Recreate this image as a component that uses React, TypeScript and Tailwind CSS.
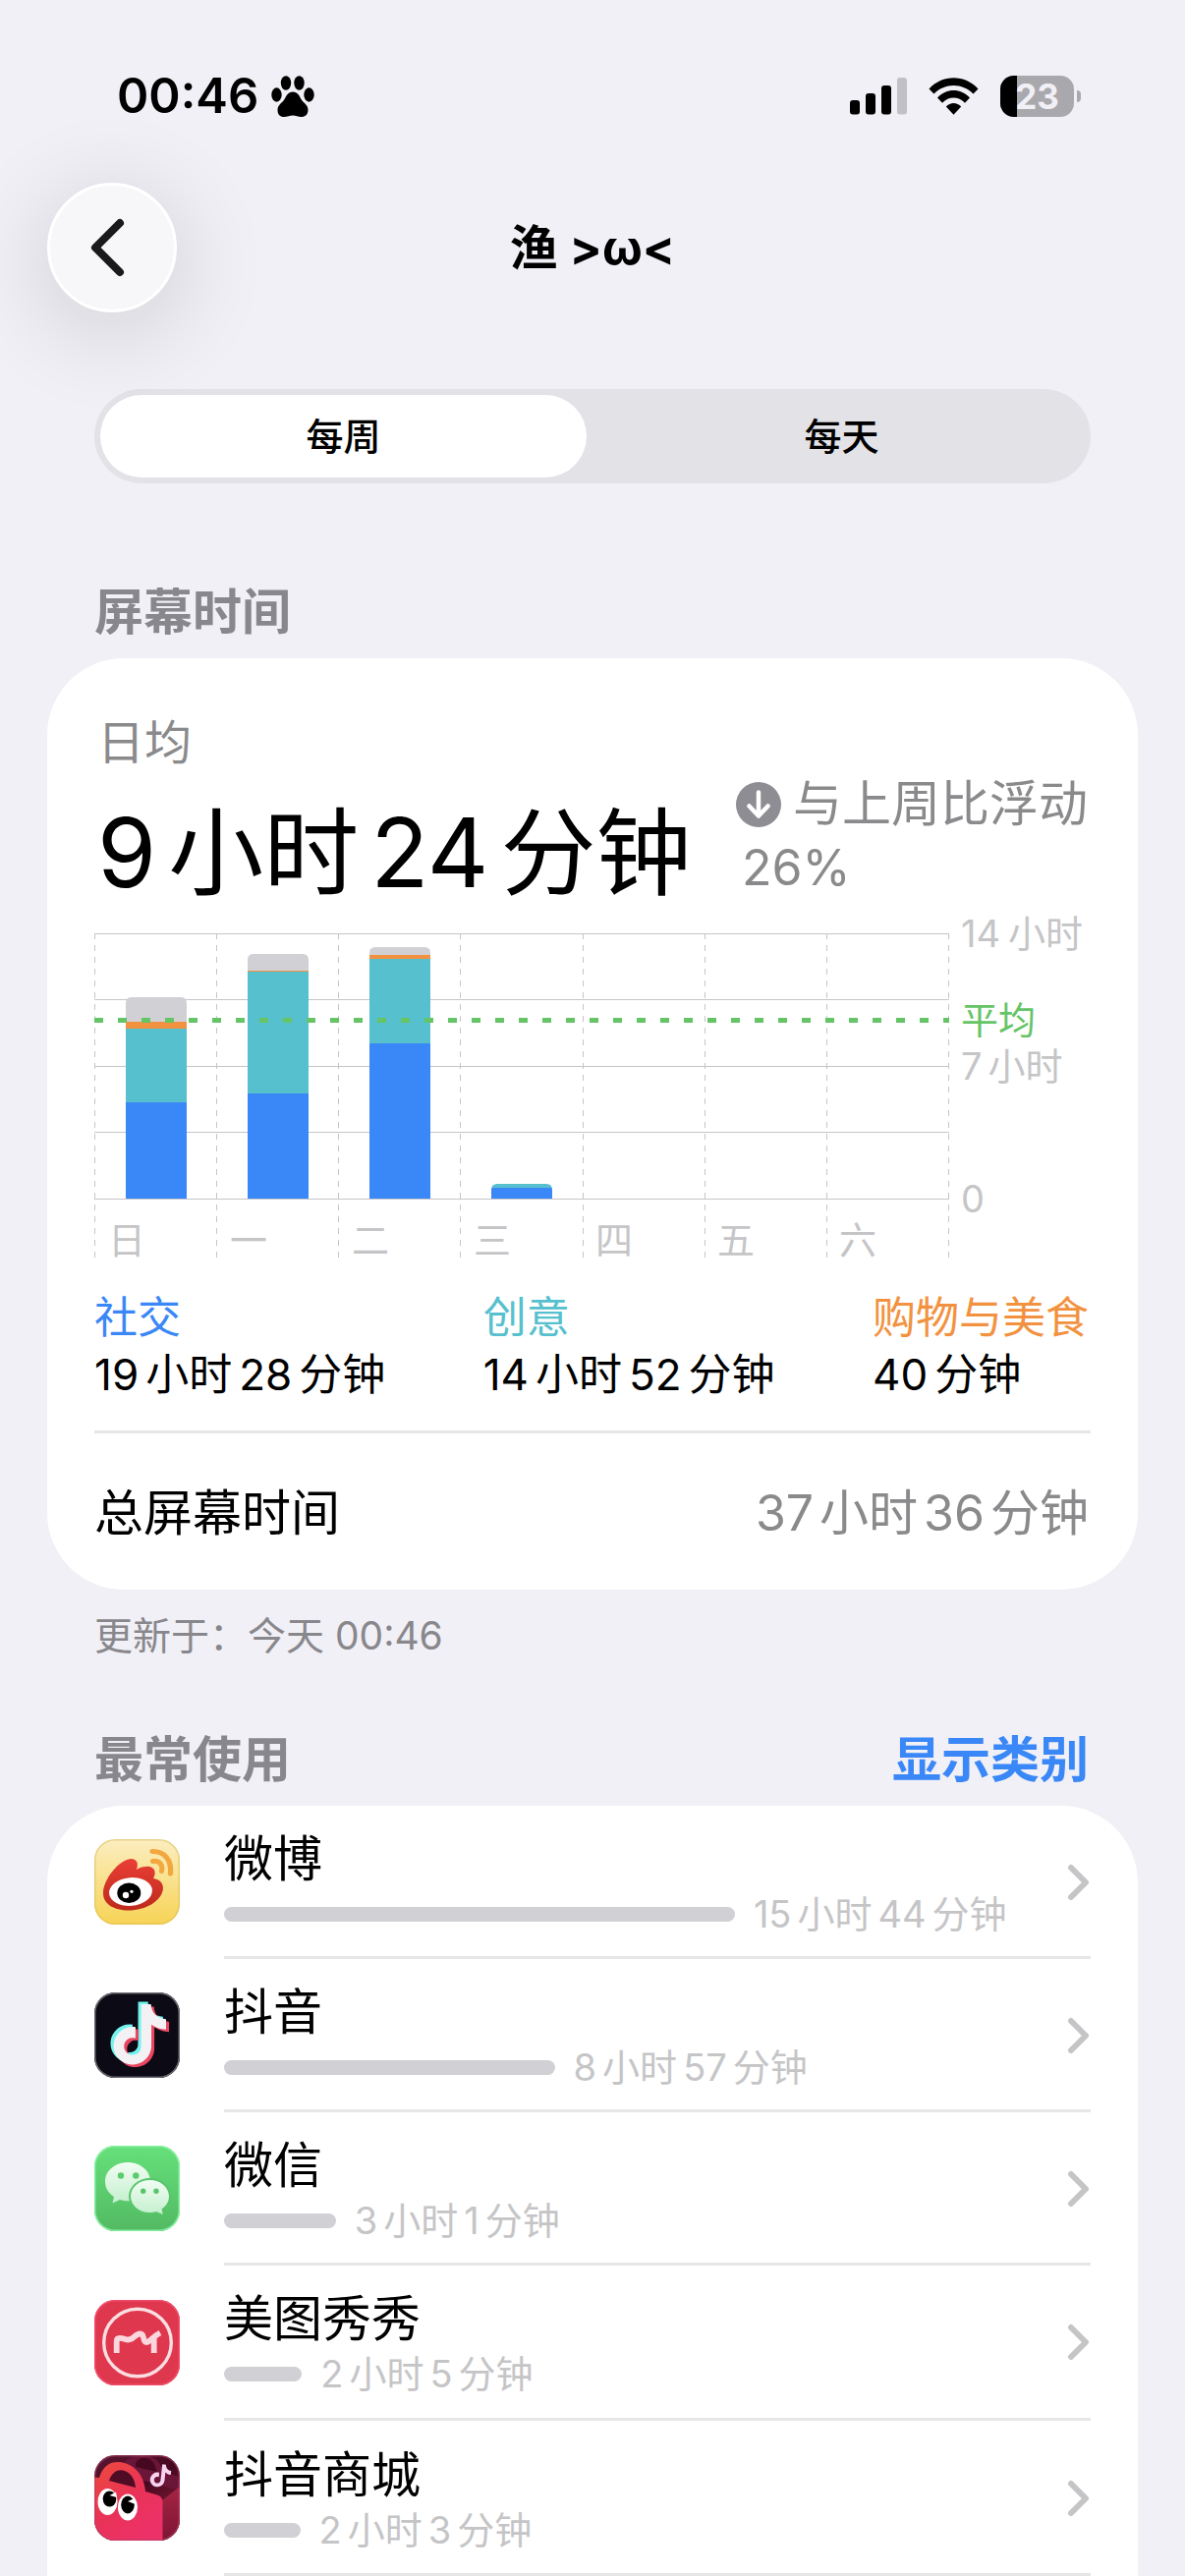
import { Fragment, useState } from 'react';
import type { ReactNode } from 'react';

const NOTE =
  'M12.525.02c1.31-.02 2.61-.01 3.91-.02.08 1.53.63 3.09 1.75 4.17 1.12 1.11 2.7 1.62 4.24 1.79v4.03c-1.44-.05-2.89-.35-4.2-.97-.57-.26-1.1-.59-1.62-.93-.01 2.92.01 5.84-.02 8.75-.08 1.4-.54 2.79-1.35 3.94-1.31 1.92-3.58 3.17-5.91 3.21-1.43.08-2.86-.31-4.08-1.03-2.02-1.19-3.44-3.37-3.65-5.71-.02-.5-.03-1-.01-1.49.18-1.9 1.12-3.72 2.58-4.96 1.66-1.44 3.98-2.13 6.15-1.72.02 1.48-.04 2.96-.04 4.44-.99-.32-2.15-.23-3.02.37-.63.41-1.11 1.04-1.36 1.75-.21.51-.15 1.07-.14 1.61.24 1.64 1.82 3.02 3.5 2.87 1.12-.01 2.19-.66 2.77-1.61.19-.33.4-.67.41-1.06.1-1.79.06-3.57.07-5.36.01-4.03-.01-8.05.02-12.07z';

/* Rounded app tile shared by every app icon */
function Tile({ fill, edge, children }: { fill: string; edge: string; children: ReactNode }) {
  return (
    <svg viewBox="0 0 87 87" className="size-[87px] shrink-0" aria-hidden="true">
      <rect width="87" height="87" rx="21" fill={fill} />
      {children}
      <rect x="0.75" y="0.75" width="85.5" height="85.5" rx="20.5" fill="none" stroke={edge} strokeWidth="1.5" />
    </svg>
  );
}

function WeiboIcon() {
  return (
    <Tile fill="url(#wb)" edge="#d9bb5a88">
      <defs>
        <linearGradient id="wb" x1="0" y1="0" x2="0" y2="1">
          <stop offset="0" stopColor="#fbeec0" />
          <stop offset="1" stopColor="#f7d355" />
        </linearGradient>
        <linearGradient id="wbr" x1="0" y1="0" x2="0" y2="1">
          <stop offset="0" stopColor="#ea3f35" />
          <stop offset="1" stopColor="#be2a1d" />
        </linearGradient>
      </defs>
      <path
        d="M9 55C9 41 25 21 37 20C44 20 45 25 43 31C50 27 60 26 61.500 33C62 36 61 38 60 40C67 41 70 45 70 50C69 63 52 72.500 35 72.500C20 72.500 9 66 9 55Z"
        fill="url(#wbr)"
      />
      <ellipse cx="37" cy="53.500" rx="22" ry="14.300" fill="#fff" transform="rotate(-5 37 53.500)" />
      <ellipse cx="35.300" cy="54.700" rx="12" ry="10.200" fill="#000" />
      <circle cx="32" cy="57" r="3.200" fill="#fff" />
      <circle cx="38" cy="53.300" r="1.600" fill="#fff" />
      <path d="M59.500 22.500C66 21.500 70 26 68.500 32.500" fill="none" stroke="#f2a73f" strokeWidth="5" strokeLinecap="round" />
      <path d="M59 12.500C71 12 79 21 77.500 35" fill="none" stroke="#f2a73f" strokeWidth="5.200" strokeLinecap="round" />
    </Tile>
  );
}

function DouyinIcon() {
  return (
    <Tile fill="#0b0a15" edge="#6a6a72">
      <g transform="translate(12.500 9.500) scale(2.560)">
        <path d={NOTE} fill="#74f3ee" />
        <path d={NOTE} fill="#ea4561" transform="translate(2.400 2)" />
        <path d={NOTE} fill="#f3f1f3" transform="translate(1.200 1)" />
      </g>
    </Tile>
  );
}

function WechatIcon() {
  return (
    <Tile fill="url(#wc)" edge="#86f0a0">
      <defs>
        <linearGradient id="wc" x1="0" y1="0" x2="0" y2="1">
          <stop offset="0" stopColor="#66e07a" />
          <stop offset="1" stopColor="#52ba63" />
        </linearGradient>
        <linearGradient id="wcb" x1="0" y1="0" x2="0" y2="1">
          <stop offset="0" stopColor="#f1fdf3" />
          <stop offset="1" stopColor="#c4efcd" />
        </linearGradient>
      </defs>
      <path
        d="M34 17C21 17 11 25.500 11 36.500C11 43 14.500 48.500 20 52L18.500 58.500L26 55C30 56.300 35 56.500 38 56C50 54 57 46 57 36.500C57 25.500 47 17 34 17Z"
        fill="url(#wcb)"
      />
      <ellipse cx="56.500" cy="51.500" rx="21.500" ry="18.500" fill="#58c56b" />
      <path
        d="M56.500 35C67.500 35 76 42.500 76 51.500C76 57 73 61.500 68.500 64.500L69.800 70L63 67C61 67.700 58.500 68 56.500 68C45.500 68 37 60.500 37 51.500C37 42.500 45.500 35 56.500 35Z"
        fill="url(#wcb)"
      />
      <circle cx="27" cy="30.500" r="3.200" fill="#5bcb6e" />
      <circle cx="42.300" cy="30.500" r="3.200" fill="#5bcb6e" />
      <circle cx="49.700" cy="46.300" r="2.700" fill="#58c56b" />
      <circle cx="63" cy="46.300" r="2.700" fill="#58c56b" />
    </Tile>
  );
}

function MeituIcon() {
  return (
    <Tile fill="#df384e" edge="#f04d6b">
      <circle cx="44" cy="43.500" r="34.300" fill="none" stroke="#fbdde2" strokeWidth="3.400" />
      <path
        d="M22.700 54V42Q22.700 38.800 26 38.800C30 38.800 31 40.500 34.500 40.500C40 40.500 41.500 34.500 46.500 34.500C52 34.500 48.500 43 53 43C56.500 43 59 37.500 67 33.500M60.700 39V54"
        fill="none"
        stroke="#fbd7dd"
        strokeWidth="5.800"
        strokeLinejoin="round"
      />
    </Tile>
  );
}

function MallIcon() {
  return (
    <Tile fill="url(#mb)" edge="#b0486a88">
      <defs>
        <linearGradient id="mb" x1="0" y1="0" x2="0.600" y2="1">
          <stop offset="0" stopColor="#5c1732" />
          <stop offset="0.500" stopColor="#45081f" />
          <stop offset="1" stopColor="#8e1f3c" />
        </linearGradient>
        <linearGradient id="mf" x1="0" y1="0" x2="0.700" y2="1">
          <stop offset="0" stopColor="#ee4a3c" />
          <stop offset="0.550" stopColor="#e93258" />
          <stop offset="1" stopColor="#ec3168" />
        </linearGradient>
        <linearGradient id="ms" x1="0" y1="0" x2="0" y2="1">
          <stop offset="0" stopColor="#a62444" />
          <stop offset="1" stopColor="#7d1533" />
        </linearGradient>
        <clipPath id="mc">
          <rect width="87" height="87" rx="21" />
        </clipPath>
      </defs>
      <g clipPath="url(#mc)">
        <path d="M30 8C38 -3 58 -3 66 8L72 18L87 22V36L50 26Z" fill="#6a1638" />
        <path d="M42 8C46 1 56 1 61 9L64 17L42 12Z" fill="#45081f" />
        <path d="M69 46L87 32V87H69Z" fill="url(#ms)" />
        <path
          d="M0 22.500L5 23C9 10 17 6.500 25 7C40 8 51 20 52 37L64 40.500Q69.500 42 69.500 48V87H0Z"
          fill="url(#mf)"
        />
        <path d="M15 26C18 17 24 14.500 29 15.500C36 17 41 23 42 33Z" fill="#4e0d25" />
        <ellipse cx="13.500" cy="47.500" rx="10" ry="13.500" fill="#fff" />
        <ellipse cx="34" cy="53" rx="10" ry="13.500" fill="#fff" />
        <ellipse cx="15.500" cy="44.500" rx="6.800" ry="8" fill="#000" />
        <ellipse cx="34" cy="50.500" rx="6.800" ry="9" fill="#000" />
        <path d="M15.500 41L22 37.500L23 43Z" fill="#fff" />
        <path d="M34 47L41 44L42 50Z" fill="#fff" />
        <path d={NOTE} fill="#f6d3ef" transform="translate(57 8) rotate(6) scale(0.980)" />
      </g>
    </Tile>
  );
}

/* Splits "9小时24分钟" style durations so numbers and units get a small gap */
function Duration({ value, gap }: { value: string; gap: string }) {
  const parts = value.match(/\d+|\D+/g) ?? [];
  return (
    <>
      {parts.map((part, i) => (
        <Fragment key={i}>{i === 0 ? part : <span className={gap}>{part}</span>}</Fragment>
      ))}
    </>
  );
}

function StatusBar() {
  return (
    <div className="mt-[70px] flex h-14 items-center justify-between pr-[58px] pl-[71px]">
      <div className="flex items-center gap-[13px]">
        <span className="text-[49px] leading-14 font-semibold">00:46</span>
        <svg viewBox="0 0 44 42" className="h-[42px] w-11" aria-hidden="true">
          <ellipse cx="15" cy="7.500" rx="5.200" ry="7.300" />
          <ellipse cx="28.500" cy="7.500" rx="5.200" ry="7.300" />
          <ellipse cx="5.500" cy="19.500" rx="5.200" ry="7.200" />
          <ellipse cx="38.500" cy="19.500" rx="5.200" ry="7.200" />
          <path d="M22 16.500C27 16.500 28.500 20.500 30.500 24C33 28 37.500 29.500 37.500 35C37.500 39.500 34.500 42 30.500 42C27.500 42 25 40.500 22 40.500C19 40.500 16.500 42 13 42C9 42 6.500 39.500 6.500 35C6.500 29.500 11 28 13.500 24C15.500 20.500 17 16.500 22 16.500Z" />
        </svg>
      </div>
      <div className="flex items-center">
        <svg viewBox="0 0 58 38" className="h-[38px] w-[58px]" aria-label="蜂窝信号">
          <rect x="0" y="23" width="10" height="14.500" rx="3" />
          <rect x="16" y="16" width="10" height="21.500" rx="3" />
          <rect x="32" y="8" width="10" height="29.500" rx="3" />
          <rect x="48" y="0" width="10" height="37.500" rx="3" fill="#c1c0c5" />
        </svg>
        <svg viewBox="0 0 51 38" className="ml-[22px] h-[38px] w-[51px]" aria-label="无线局域网">
          <path d="M0.500 11.500C14 -3.500 37 -3.500 50.500 11.500L45.500 16.500C34.500 5 16.500 5 5.500 16.500Z" />
          <path d="M9 20.500C18 10.500 33 10.500 42 20.500L37 25.800C30.500 18.800 20.500 18.800 14 25.800Z" />
          <path d="M17.800 29.500C22 24.800 29 24.800 33.200 29.500L25.500 37.700Z" />
        </svg>
        <div className="relative ml-[22px] flex h-[42px] w-[75px] items-center justify-center overflow-hidden rounded-[14px] bg-[#a9a8ad]">
          <span className="absolute inset-y-0 left-0 w-[17px] bg-black" />
          <span className="relative text-[35px] leading-[42px] font-bold text-[#f1f0f6]">23</span>
        </div>
        <span className="ml-[3px] h-3 w-1 rounded-r-full bg-[#a9a8ad]" />
      </div>
    </div>
  );
}

const SCALE = 270;
const days = [
  { label: '日', parts: [98, 75, 7, 25] },
  { label: '一', parts: [107, 124, 1, 17] },
  { label: '二', parts: [158, 86, 4, 8] },
  { label: '三', parts: [11, 4, 0, 0] },
  { label: '四', parts: [] },
  { label: '五', parts: [] },
  { label: '六', parts: [] },
];
const partColors = ['#3a87f7', '#56c0ce', '#f29240', '#d1d0d5'];

function WeekChart() {
  const top = 30;
  const base = top + SCALE;
  return (
    <svg viewBox="0 0 1014 360" className="block h-auto w-full overflow-visible text-[38px]" role="img" aria-label="每周屏幕时间">
      {[0, 67, 135, 202, 270].map((y) => (
        <path key={y} d={`M0 ${top + y + 0.5}H870`} stroke="#c6c6ca" />
      ))}
      {[0, 124, 248, 372, 497, 621, 745, 869].map((x) => (
        <path key={x} d={`M${x + 0.5} ${top}V360`} stroke="#c6c6ca" strokeDasharray="6 6" />
      ))}
      {days.map((day, i) => {
        const x = 32 + i * 124;
        const total = day.parts.reduce((a, b) => a + b, 0);
        let y = base;
        return (
          <g key={day.label}>
            <clipPath id={`bar${i}`}>
              <path d={`M${x} ${base}V${base - total + 6}q0 -6 6 -6h50q6 0 6 6V${base}Z`} />
            </clipPath>
            <g clipPath={`url(#bar${i})`}>
              {day.parts.map((h, k) => {
                y -= h;
                return <rect key={k} x={x} y={y} width="62" height={h} fill={partColors[k]} />;
              })}
            </g>
            <text x={x + 1} y="356" textAnchor="middle" fill="#c5c5c7">
              {day.label}
            </text>
          </g>
        );
      })}
      <path d="M0 118.500H870" stroke="#65c466" strokeWidth="5" strokeDasharray="9 15" />
      <g fill="#c5c5c7">
        <text x="882" y="44">
          14<tspan dx="8">小时</tspan>
        </text>
        <text x="882" y="132" fill="#65c466">
          平均
        </text>
        <text x="882" y="179">
          7<tspan dx="6">小时</tspan>
        </text>
        <text x="882" y="314">
          0
        </text>
      </g>
    </svg>
  );
}

const legend = [
  { name: '社交', time: '19小时28分钟', color: 'text-[#3a87f7]' },
  { name: '创意', time: '14小时52分钟', color: 'text-[#56c0ce]' },
  { name: '购物与美食', time: '40分钟', color: 'text-[#f29240]' },
];

const apps = [
  { name: '微博', time: '15小时44分钟', width: 59, icon: <WeiboIcon />, row: 'h-[156px] pt-[22px]' },
  { name: '抖音', time: '8小时57分钟', width: 38.2, icon: <DouyinIcon />, row: 'h-[156px] pt-[22px]' },
  { name: '微信', time: '3小时1分钟', width: 12.9, icon: <WechatIcon />, row: 'h-[156px] pt-[22px]' },
  { name: '美图秀秀', time: '2小时5分钟', width: 9, icon: <MeituIcon />, row: 'h-[158px] pt-[22px]' },
  { name: '抖音商城', time: '2小时3分钟', width: 8.8, icon: <MallIcon />, row: 'h-[158px] pt-[23px]' },
];

export default function App() {
  const [tab, setTab] = useState('每周');
  return (
    <main
      lang="zh-CN"
      className="flow-root min-h-screen bg-[#f1f0f6] px-12 font-['Inter','Noto_Sans_CJK_SC',sans-serif] text-black"
    >
      <StatusBar />

      <header className="mt-[60px] grid grid-cols-[132px_1fr_132px] items-center">
        <button
          type="button"
          aria-label="返回"
          className="flex size-[132px] items-center justify-center rounded-full border-3 border-white bg-[#f7f7f9] shadow-[0_16px_90px_10px_rgba(0,0,0,0.12)]"
        >
          <svg viewBox="0 0 40 64" className="mr-3 h-16 w-10" fill="none" stroke="#1a1a1c" strokeWidth="8" strokeLinecap="round" strokeLinejoin="round">
            <path d="M34 7L9 32L34 57" />
          </svg>
        </button>
        <h1 className="pt-[2px] text-center text-[49px] leading-[64px] font-bold">渔 &gt;ω&lt;</h1>
      </header>

      <div className="mx-12 mt-[78px] grid h-24 grid-cols-2 gap-[12px] rounded-full bg-[#e3e2e7] p-[6px]">
        {['每周', '每天'].map((t) => (
          <button
            key={t}
            type="button"
            aria-pressed={tab === t}
            onClick={() => setTab(t)}
            className={
              tab === t
                ? 'rounded-full bg-white text-[38px] leading-[48px] font-medium'
                : 'rounded-full text-[38px] leading-[48px] font-medium'
            }
          >
            {t}
          </button>
        ))}
      </div>

      <h2 className="mx-12 mt-[96px] text-[50px] leading-[70px] font-semibold text-[#88878c]">屏幕时间</h2>

      <section className="mt-[12px] rounded-[78px] bg-white px-12 pt-[54px]">
        <div className="flex items-end justify-between">
          <div>
            <p className="pl-[3px] text-[48px] leading-[64px] text-[#8a8a8c]">日均</p>
            <p className="mt-[20px] pl-[3px] text-[97px] leading-[120px] whitespace-nowrap">
              <Duration value="9小时24分钟" gap="ml-[12px]" />
            </p>
          </div>
          <div className="pr-[3px] pb-[12px] text-[50px] leading-[65px] whitespace-nowrap text-[#8a8a8c]">
            <p className="flex items-center">
              <svg viewBox="0 0 46 46" className="mr-[12px] size-[46px]" aria-hidden="true">
                <circle cx="23" cy="23" r="23" fill="#8e8d93" />
                <path d="M23 10.500V34M13.500 24.500L23 34.500L32.500 24.500" fill="none" stroke="#fff" strokeWidth="4.500" strokeLinecap="round" strokeLinejoin="round" />
              </svg>
              与上周比浮动
            </p>
            <p className="pl-[6px]">26%</p>
          </div>
        </div>

        <div className="-mt-[8px]">
          <WeekChart />
        </div>

        <dl className="mt-[33px] flex justify-between pr-[2px] text-[44px] whitespace-nowrap">
          {legend.map((item) => (
            <div key={item.name}>
              <dt className={`leading-[56px] ${item.color}`}>{item.name}</dt>
              <dd className="leading-[60px]">
                <Duration value={item.time} gap="ml-[7px]" />
              </dd>
            </div>
          ))}
        </dl>

        <div className="mt-[27px] flex h-[162px] items-center justify-between border-t-3 border-[#e6e6e6] pt-[2px] pr-[2px] text-[50px] leading-[70px]">
          <span>总屏幕时间</span>
          <span className="text-[#8a8a8c]">
            <Duration value="37小时36分钟" gap="ml-[6px]" />
          </span>
        </div>
      </section>

      <p className="mx-12 mt-[19px] text-[39px] leading-[56px] text-[#88878c]">更新于：今天 00:46</p>

      <div className="mx-12 mt-[63px] flex items-center justify-between pr-[2px] text-[50px] leading-[70px] font-semibold">
        <h2 className="text-[#88878c]">最常使用</h2>
        <button type="button" className="text-[#3a87f7]">
          显示类别
        </button>
      </div>

      <ul className="mt-[12px] rounded-t-[78px] bg-white px-12">
        {apps.map((app) => (
          <li key={app.name}>
            <a href="#" className="flex gap-[45px]">
              <span className="flex items-center pb-[2px]">{app.icon}</span>
              <span className={`flex min-w-0 grow items-start border-b-3 border-[#e6e6e6] ${app.row}`}>
                <span className="min-w-0 grow">
                  <span className="block text-[50px] leading-[64px]">{app.name}</span>
                  <span className="flex items-center gap-[19px]">
                    <span className="h-[15px] shrink-0 rounded-full bg-[#d1d0d5]" style={{ width: `${app.width * 1.027}%` }} />
                    <span className="text-[38px] leading-[48px] whitespace-nowrap text-[#c5c5c7]">
                      <Duration value={app.time} gap="ml-[6px]" />
                    </span>
                  </span>
                </span>
                <svg viewBox="0 0 24 40" className="mt-[36px] h-10 w-6 shrink-0" fill="none" stroke="#c5c5c7" strokeWidth="6" strokeLinecap="round" strokeLinejoin="round" aria-hidden="true">
                  <path d="M4 5L19 20L4 35" />
                </svg>
              </span>
            </a>
          </li>
        ))}
      </ul>
    </main>
  );
}
